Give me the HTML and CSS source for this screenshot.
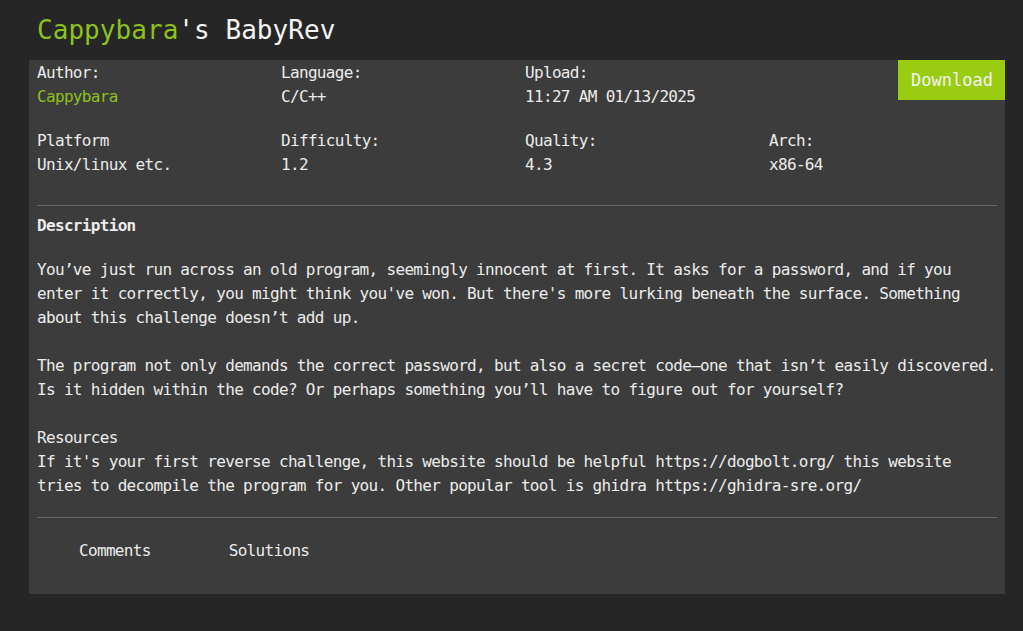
FILE: index.html
```html
<!DOCTYPE html>
<html lang="en">
<head>
<meta charset="utf-8">
<title>Cappybara's BabyRev</title>
<link rel="stylesheet" href="styles.css">
</head>
<body>
<div class="page">
  <h1 class="title"><span class="accent">Cappybara</span>'s BabyRev</h1>
  <section class="card">
    <a class="download" href="#">Download</a>
    <div class="info">
      <div class="field"><div>Author:</div><div class="accent">Cappybara</div></div>
      <div class="field"><div>Language:</div><div>C/C++</div></div>
      <div class="field"><div>Upload:</div><div>11:27 AM 01/13/2025</div></div>
      <div class="field"></div>
      <div class="field"><div>Platform</div><div>Unix/linux etc.</div></div>
      <div class="field"><div>Difficulty:</div><div>1.2</div></div>
      <div class="field"><div>Quality:</div><div>4.3</div></div>
      <div class="field"><div>Arch:</div><div>x86-64</div></div>
    </div>
    <div class="inner">
      <hr class="rule rule-top">
      <h2 class="desc-title">Description</h2>
      <div class="desc">
        <p>You’ve just run across an old program, seemingly innocent at first. It asks for a password, and if you enter it correctly, you might think you've won. But there's more lurking beneath the surface. Something about this challenge doesn’t add up.</p>
        <p>The program not only demands the correct password, but also a secret code—one that isn’t easily discovered. Is it hidden within the code? Or perhaps something you’ll have to figure out for yourself?</p>
        <p>Resources<br>If it's your first reverse challenge, this website should be helpful https://dogbolt.org/ this website tries to decompile the program for you. Other popular tool is ghidra https://ghidra-sre.org/</p>
      </div>
      <hr class="rule rule-bottom">
      <ul class="tabs">
        <li>Comments</li>
        <li>Solutions</li>
      </ul>
    </div>
  </section>
</div>
</body>
</html>
```

FILE: styles.css
```css
html, body {
  margin: 0;
  padding: 0;
}
body {
  background: #262626;
  color: #ececec;
  font-family: "DejaVu Sans Mono", "Liberation Mono", monospace;
  font-size: 16px;
  letter-spacing: -0.672px;
  line-height: 24px;
}
.page {
  padding: 0 18px 0 29px;
}
.title {
  margin: 0;
  padding-left: 8px;
  font-size: 26px;
  line-height: 60px;
  font-weight: normal;
  letter-spacing: 0.05px;
  color: #f4f4f4;
}
.accent {
  color: #8cc21d;
}
.card {
  position: relative;
  background: #3c3c3c;
  padding: 0 0 31px;
}
.download {
  position: absolute;
  top: 0;
  right: 0;
  height: 40px;
  line-height: 40px;
  padding: 0 12px 0 13px;
  background: #9acc12;
  color: #f2f2f2;
  font-size: 17px;
  letter-spacing: 0;
  text-decoration: none;
}
.info {
  display: grid;
  grid-template-columns: repeat(4, 244px);
  row-gap: 20px;
  padding-top: 1px;
}
.field {
  padding-left: 8px;
  min-height: 48px;
}
.inner {
  padding: 0 0 0 8px;
}
.rule {
  border: 0;
  height: 1px;
  background: #686868;
  margin: 0 8px 0 0;
}
.rule-top {
  margin-top: 28px;
}
.desc-title {
  margin: 8px 0 20px;
  font-size: 16px;
  line-height: 24px;
  font-weight: bold;
}
.desc {
  margin-right: 4px;
}
.desc p {
  margin: 0 0 24px;
}
.desc p:last-child {
  margin-bottom: 0;
}
.rule-bottom {
  margin-top: 19px;
}
.tabs {
  list-style: none;
  margin: 21px 0 0;
  padding: 0 0 0 42px;
  display: flex;
  gap: 78px;
}
```
